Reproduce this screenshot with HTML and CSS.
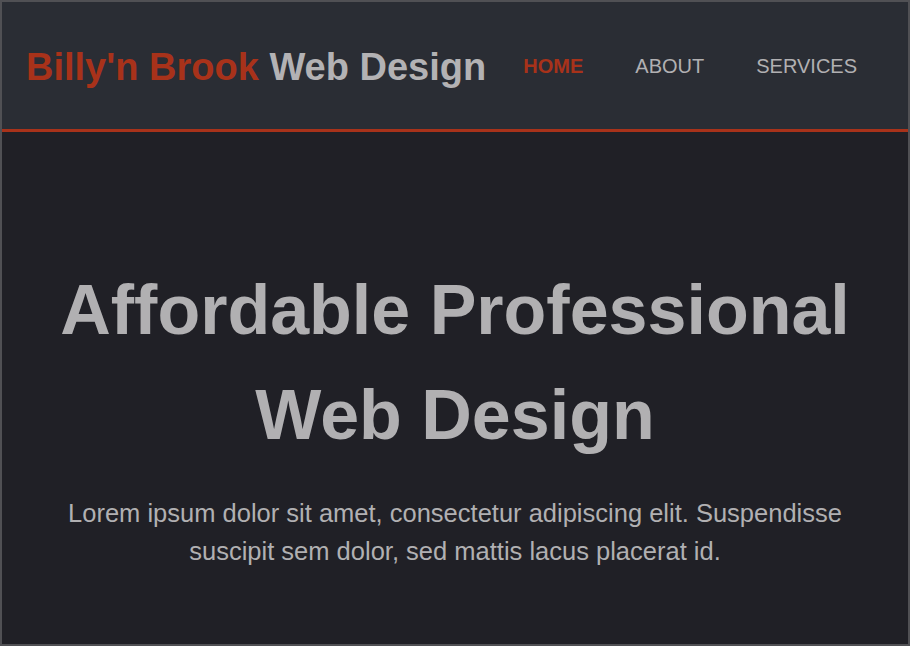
FILE: index.html
```html
<!DOCTYPE html>
<html lang="en">
<head>
<meta charset="utf-8">
<title>Billy'n Brook Web Design</title>
<link rel="stylesheet" href="styles.css">
</head>
<body>
<div class="page">
  <header class="header">
    <div class="logo"><span class="logo-accent">Billy'n Brook</span> Web Design</div>
    <nav class="nav">
      <a class="nav-link active" href="#">HOME</a>
      <a class="nav-link" href="#">ABOUT</a>
      <a class="nav-link" href="#">SERVICES</a>
    </nav>
  </header>
  <main class="hero">
    <h1 class="hero-title">Affordable Professional Web Design</h1>
    <p class="hero-text">Lorem ipsum dolor sit amet, consectetur adipiscing elit. Suspendisse suscipit sem dolor, sed mattis lacus placerat id.</p>
  </main>
</div>
</body>
</html>
```

FILE: styles.css
```css
* { box-sizing: border-box; }
html, body { margin: 0; padding: 0; }
body {
  font-family: "Liberation Sans", Arial, sans-serif;
  background: #202026;
  color: #b1b0b2;
}
.page {
  width: 910px;
  height: 646px;
  border: 2px solid #505054;
  background: #202026;
  display: flex;
  flex-direction: column;
  overflow: hidden;
}
.header {
  height: 130px;
  background: #2a2d34;
  border-bottom: 3px solid #a8321a;
  display: flex;
  align-items: center;
  justify-content: space-between;
  padding: 0 0 0 24px;
}
.logo {
  font-size: 38px;
  font-weight: bold;
  color: #b3b2b4;
  margin-top: 3px;
}
.logo-accent { color: #a8321a; }
.nav { display: flex; padding-right: 25px; margin-top: 1px; }
.nav-link {
  font-size: 20px;
  color: #b1b0b2;
  text-decoration: none;
  padding: 0 26px;
}
.nav-link.active { color: #a8321a; font-weight: bold; }
.hero {
  text-align: center;
  padding: 126px 40px 0;
}
.hero-title {
  margin: 0;
  font-size: 70px;
  line-height: 105px;
  font-weight: bold;
  color: #b1b0b2;
}
.hero-text {
  margin: 26px 0 0;
  font-size: 25.5px;
  line-height: 38px;
  color: #b1b0b2;
}
```
